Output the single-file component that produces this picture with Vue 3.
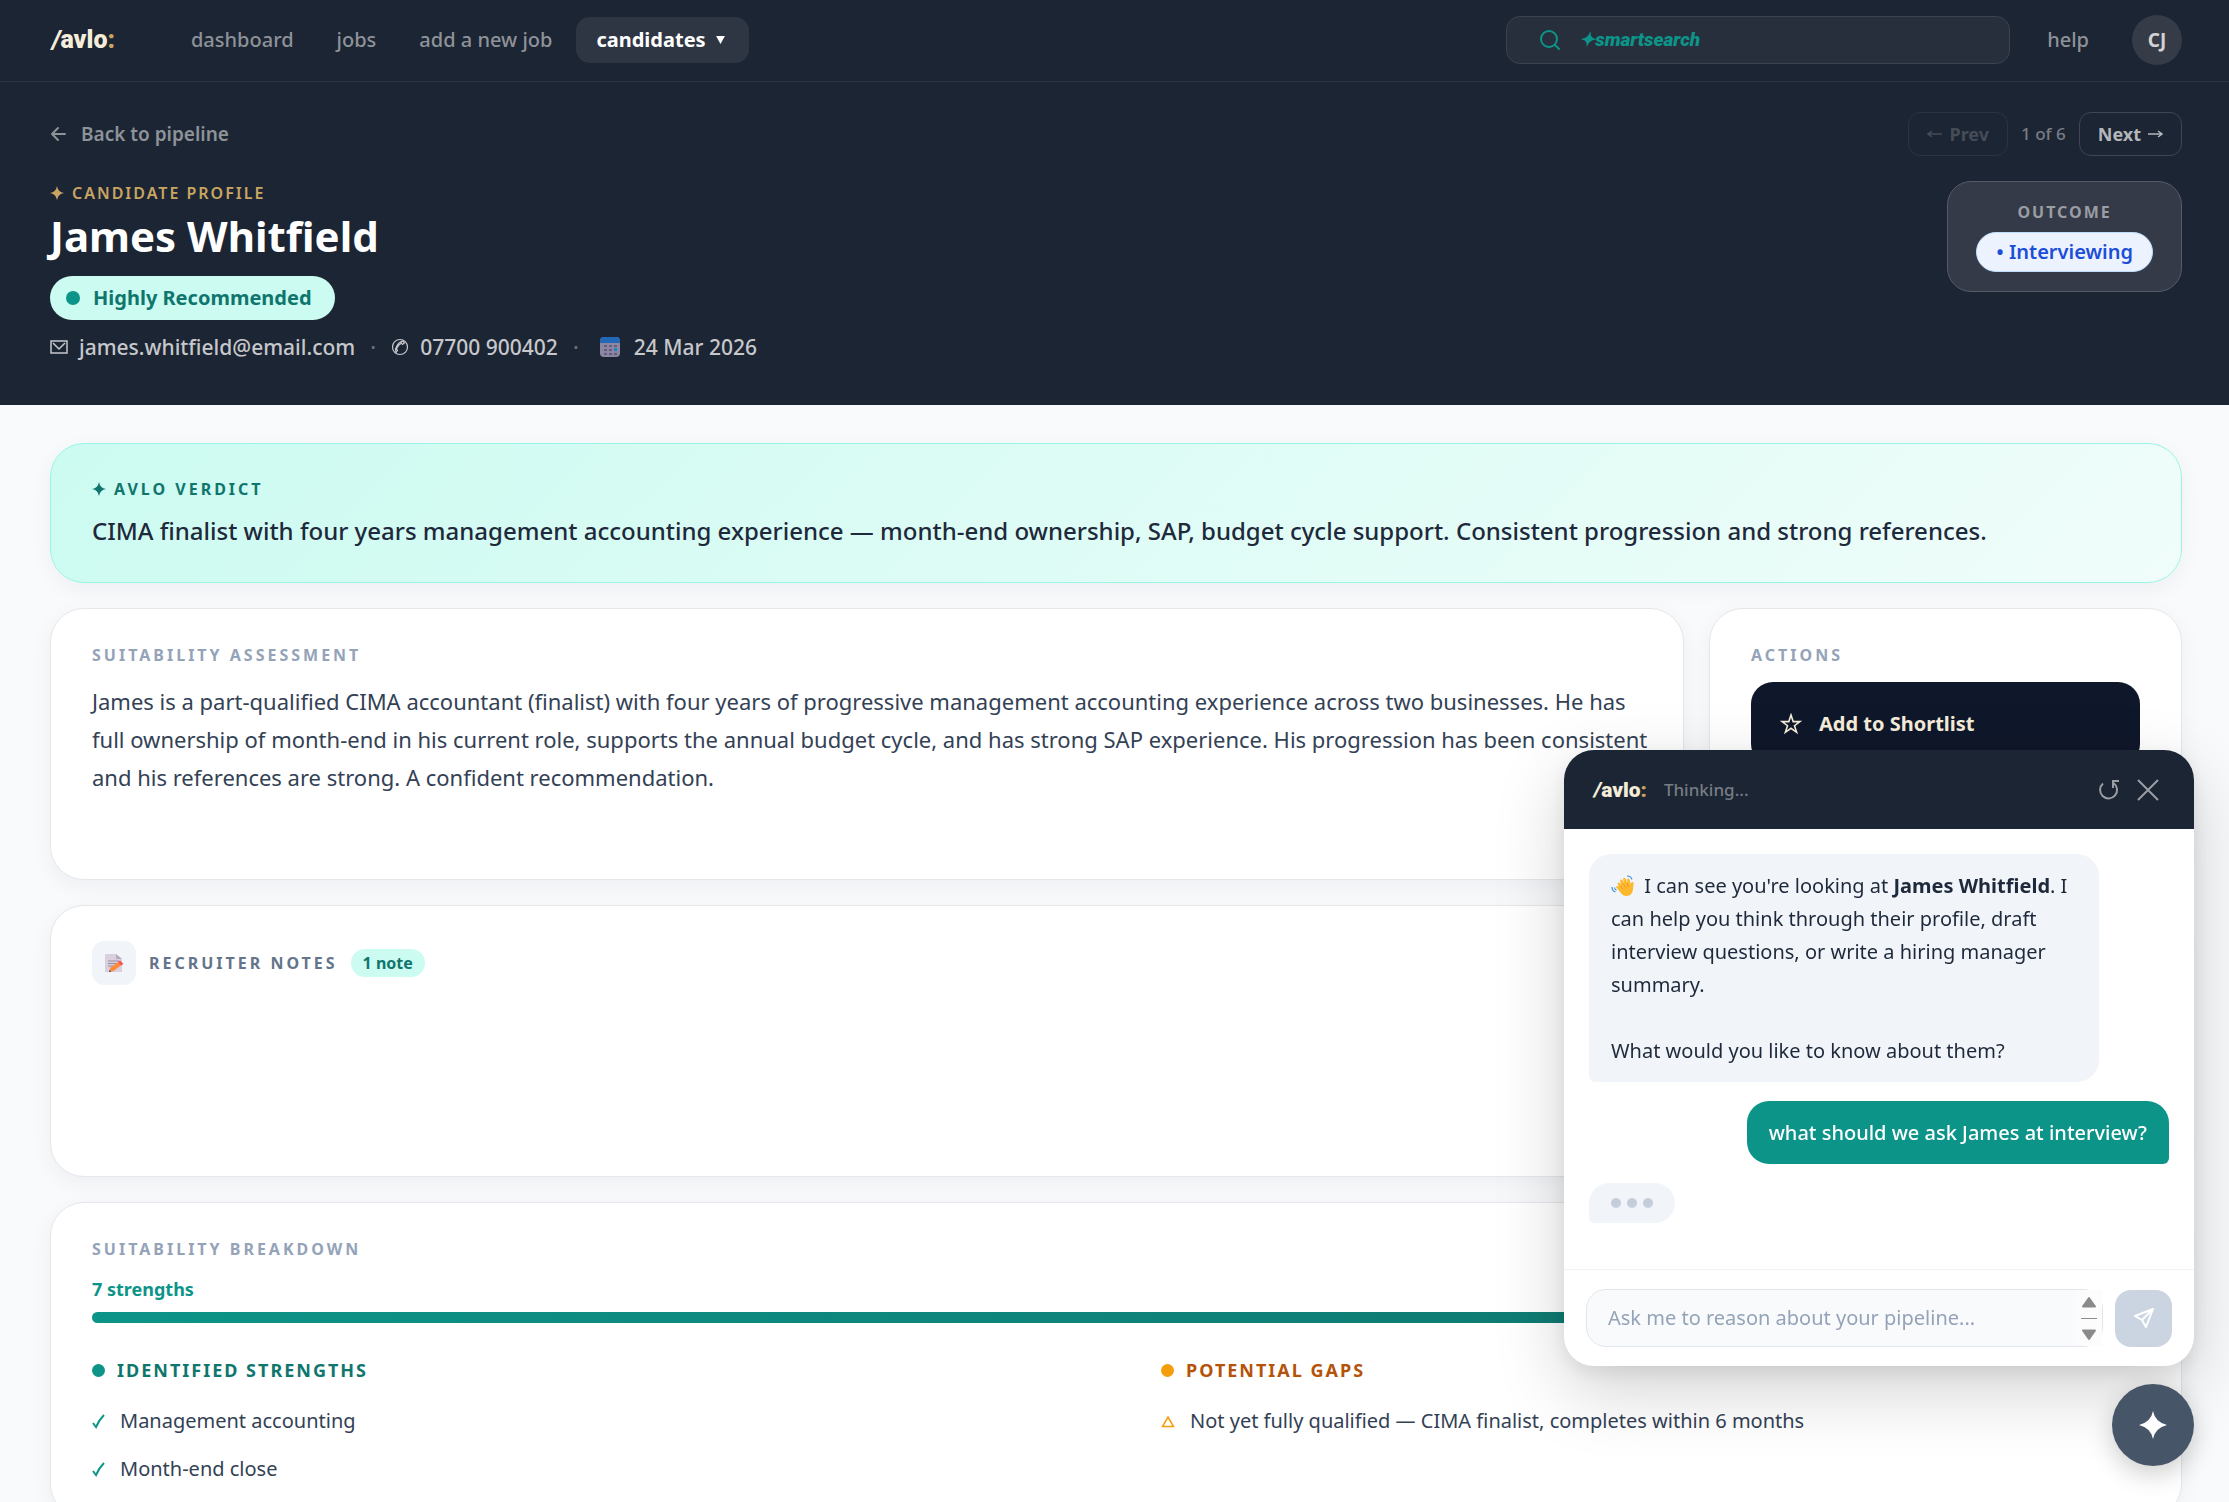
<script setup>
import { ref } from 'vue'

const navLinks = ['dashboard', 'jobs', 'add a new job']
const strengths = ['Management accounting', 'Month-end close']
const gaps = ['Not yet fully qualified — CIMA finalist, completes within 6 months']
const strengthShare = ref(88)
const search = ref('')
const draft = ref('')
</script>

<template>
  <div class="shell">
    <header class="nav">
      <a href="#" class="logo"><i>/</i>avlo<span>:</span></a>
      <nav class="links">
        <a v-for="link in navLinks" :key="link" href="#">{{ link }}</a>
        <button type="button" class="active">
          candidates
          <svg width="9" height="8" viewBox="0 0 10 9" aria-hidden="true"><path d="M0 0h10L5 9z" fill="currentColor" /></svg>
        </button>
      </nav>
      <label class="search">
        <svg width="22" height="22" viewBox="0 0 22 22" fill="none" stroke="currentColor" stroke-width="2" stroke-linecap="round" aria-hidden="true">
          <circle cx="10" cy="10" r="8" /><path d="M16 16l4 4" />
        </svg>
        <input v-model="search" type="text" placeholder="✦smartsearch" aria-label="Smart search" />
      </label>
      <a href="#" class="help">help</a>
      <button type="button" class="avatar">CJ</button>
    </header>

    <section class="hero">
      <div class="hero-bar">
        <a href="#" class="back">
          <svg width="16" height="16" viewBox="0 0 16 16" fill="none" stroke="currentColor" stroke-width="2" stroke-linecap="round" stroke-linejoin="round" aria-hidden="true"><path d="M15 8H2M8 2L2 8l6 6" /></svg>
          Back to pipeline
        </a>
        <div class="pager">
          <button type="button" disabled>
            <svg width="15" height="8" viewBox="0 0 15 8" fill="none" stroke="currentColor" stroke-width="1.5" aria-hidden="true"><path d="M15 4H1M5 1L1 4l4 3" /></svg>
            Prev
          </button>
          <span>1 of 6</span>
          <button type="button">
            Next
            <svg width="15" height="8" viewBox="0 0 15 8" fill="none" stroke="currentColor" stroke-width="1.5" aria-hidden="true"><path d="M0 4h14M10 1l4 3-4 3" /></svg>
          </button>
        </div>
      </div>
      <div class="hero-main">
        <div>
          <p class="eyebrow gold">
            <svg class="spark" viewBox="0 0 14 14" aria-hidden="true"><path d="M7 0Q8 6 14 7Q8 8 7 14Q6 8 0 7Q6 6 7 0z" fill="currentColor" /></svg>
            CANDIDATE PROFILE
          </p>
          <h1>James Whitfield</h1>
          <span class="rating"><i></i>Highly Recommended</span>
          <ul class="contact">
            <li>
              <svg width="18" height="14" viewBox="0 0 18 14" fill="none" stroke="currentColor" stroke-width="1.5" aria-hidden="true"><rect x="1" y="1" width="16" height="12" /><path d="M3 3l6 6 6-6" /></svg>
              james.whitfield@email.com
            </li>
            <li class="sep">·</li>
            <li>
              <svg width="18" height="18" viewBox="0 0 18 18" fill="none" stroke="currentColor" stroke-width="1.2" aria-hidden="true"><circle cx="9" cy="9" r="7.5" /><path d="M5 14.500l1.500-2-1-1.500Q7 7 10.500 5l1 1.500 2-1.500-1.500-1.800Q7 4 4.500 11z" /></svg>
              07700 900402
            </li>
            <li class="sep">·</li>
            <li>
              <svg class="calendar" width="22" height="22" viewBox="0 0 22 22" aria-hidden="true">
                <rect x="1" y="1" width="20" height="20" rx="4" fill="#8d86a3" />
                <path d="M5 1h12a4 4 0 0 1 4 4v2H1V5a4 4 0 0 1 4-4z" fill="#2268b5" />
                <path d="M5 9h3v2H5zM10 9h3v2h-3zM15 9h3v2h-3zM5 13h3v2H5zM10 13h3v2h-3zM5 17h3v2H5zM10 17h3v2h-3zM15 17h3v2h-3z" fill="#645d7d" />
                <path d="M15 12h3v3h-3z" fill="#1d84c6" />
              </svg>
              24 Mar 2026
            </li>
          </ul>
        </div>
        <aside class="outcome">
          <p>OUTCOME</p>
          <span>• Interviewing</span>
        </aside>
      </div>
    </section>

    <main class="content">
      <section class="card verdict">
        <p class="eyebrow wide">
          <svg class="spark" viewBox="0 0 14 14" aria-hidden="true"><path d="M7 0Q8 6 14 7Q8 8 7 14Q6 8 0 7Q6 6 7 0z" fill="currentColor" /></svg>
          AVLO VERDICT
        </p>
        <p class="verdict-text">CIMA finalist with four years management accounting experience — month-end ownership, SAP, budget cycle support. Consistent progression and strong references.</p>
      </section>

      <div class="split">
        <section class="card report">
          <h2>SUITABILITY ASSESSMENT</h2>
          <p class="assessment">James is a part-qualified CIMA accountant (finalist) with four years of progressive management accounting experience across two businesses. He has full ownership of month-end in his current role, supports the annual budget cycle, and has strong SAP experience. His progression has been consistent and his references are strong. A confident recommendation.</p>
        </section>
        <section class="card">
          <h2>ACTIONS</h2>
          <button type="button" class="shortlist">
            <svg width="22" height="22" viewBox="0 0 22 22" fill="none" stroke="currentColor" stroke-width="1.6" aria-hidden="true"><path d="M11 2l2.200 6.600H20l-5.500 4.100 2.100 6.600L11 15.300l-5.600 4 2.100-6.600L2 8.600h6.800z" /></svg>
            Add to Shortlist
          </button>
        </section>
      </div>

      <section class="card notes">
        <div class="notes-head">
          <span class="notes-icon">
            <svg width="20" height="20" viewBox="0 0 20 20" aria-hidden="true">
              <path d="M1 1h11l6 5v13H1z" fill="#d9d0df" /><path d="M12 1l6 5h-6z" fill="#b5a9be" />
              <path d="M4 8h11M4 10.500h9M4 13h5" stroke="#958b9f" stroke-width="1" />
              <path d="M5 19l1.500-4.500L14 9l3 3.500-7.500 5.500z" fill="#ff8b3d" /><path d="M14 9l2-1.500 3.500 3.500L17 12.500z" fill="#f4514e" /><path d="M5 19l.6-2 1.700 1.400z" fill="#4f3b48" />
            </svg>
          </span>
          <h2>RECRUITER NOTES</h2>
          <span class="badge">1 note</span>
        </div>
      </section>

      <section class="card breakdown">
        <h2>SUITABILITY BREAKDOWN</h2>
        <p class="count">7 strengths</p>
        <div class="bar"><div class="bar-fill" :style="{ width: strengthShare + '%' }"></div></div>
        <div class="columns">
          <div>
            <h3 class="good"><i></i>IDENTIFIED STRENGTHS</h3>
            <ul>
              <li v-for="item in strengths" :key="item">
                <svg width="13" height="15" viewBox="0 0 13 15" fill="none" stroke="#0d9488" stroke-width="2" aria-hidden="true"><path d="M1 9l3 4Q7 6 12 1" /></svg>
                {{ item }}
              </li>
            </ul>
          </div>
          <div>
            <h3 class="warn"><i></i>POTENTIAL GAPS</h3>
            <ul>
              <li v-for="item in gaps" :key="item">
                <svg width="14" height="13" viewBox="0 0 14 13" fill="none" stroke="#f59e0b" stroke-width="1.5" aria-hidden="true"><path d="M7 2l5.500 9.500h-11z" /></svg>
                {{ item }}
              </li>
            </ul>
          </div>
        </div>
      </section>
    </main>

    <section class="chat" aria-label="Assistant">
      <header class="chat-head">
        <span class="logo small"><i>/</i>avlo<span>:</span></span>
        <span class="status">Thinking...</span>
        <button type="button" aria-label="Restart">
          <svg width="22" height="22" viewBox="0 0 22 22" fill="none" stroke="currentColor" stroke-width="2" aria-hidden="true"><path d="M5 4.500a8.500 8.500 0 1 0 10.500-.5" /><path d="M21 2h-6v7" /></svg>
        </button>
        <button type="button" aria-label="Close">
          <svg width="22" height="22" viewBox="0 0 22 22" fill="none" stroke="currentColor" stroke-width="2" aria-hidden="true"><path d="M1 1l20 20M21 1L1 21" /></svg>
        </button>
      </header>
      <div class="messages">
        <div class="bubble">
          <p>
            <svg class="wave" width="24" height="22" viewBox="0 0 24 22" aria-hidden="true">
              <path d="M8 12L6.500 8.500q1-2 2.500 0l1 1L9 5.500q.8-2 2.500-.3l1.500 3-1-4.700q1.200-1.800 2.700.2l1.600 4-.2-3.500q1.600-1.400 2.500.6l1.100 4.400.7-2q2-.8 2.200 1L22 14q-.5 7-6.500 7-3.500 0-6-3.500L5 12q.5-1.700 2-.8z" fill="#fdb92e" />
              <path d="M9 11l3 3M12 8.500l3 4M16 8l1.500 4" stroke="#ef942f" stroke-width="1" />
              <path d="M1 12q0 4 3.500 5M3.500 12.500q.3 2 2 2.800M16 1q4 0 5 3.500" fill="none" stroke="#4292dc" stroke-width="1.200" />
            </svg>
            I can see you're looking at <b>James Whitfield</b>. I can help you think through their profile, draft interview questions, or write a hiring manager summary.
          </p>
          <p>What would you like to know about them?</p>
        </div>
        <div class="bubble user">what should we ask James at interview?</div>
        <div class="bubble typing" aria-label="Typing"><i></i><i></i><i></i></div>
      </div>
      <form class="composer" @submit.prevent>
        <div class="field">
          <textarea v-model="draft" rows="1" placeholder="Ask me to reason about your pipeline..." aria-label="Message"></textarea>
          <svg class="scroller" width="26" height="56" viewBox="0 0 26 56" aria-hidden="true">
            <path d="M0 0h26v56H0z" fill="#fcfcfc" /><path d="M13 8l6 8.500H7zM13 49l6-8.500H7z" fill="#8b8b8b" stroke="#8b8b8b" stroke-width="2" stroke-linejoin="round" /><path d="M5 28.500h16" stroke="#8b8b8b" />
          </svg>
        </div>
        <button type="submit" class="send" aria-label="Send">
          <svg width="22" height="22" viewBox="0 0 22 22" fill="none" stroke="#fff" stroke-width="2" stroke-linejoin="round" aria-hidden="true"><path d="M20 2L2 9l7 4 4 7zM20 2L9 13" /></svg>
        </button>
      </form>
    </section>
    <button type="button" class="fab" aria-label="Toggle assistant">
      <svg width="28" height="28" viewBox="0 0 28 28" aria-hidden="true"><path d="M14 0Q16 11 28 14Q16 17 14 28Q12 17 0 14Q12 11 14 0z" fill="#fff" /></svg>
    </button>
  </div>
</template>

<style>
body {
  margin: 0;
  background: #f9fafc;
}
</style>

<style scoped>
.shell {
  height: 100vh;
  overflow: hidden;
  background: #f9fafc;
  color: #334155;
  font-family: "Noto Sans", sans-serif;
  font-size: 20px;
  line-height: 28px;
}
.shell * {
  box-sizing: border-box;
}
a {
  color: inherit;
  text-decoration: none;
}
button,
input,
textarea {
  font: inherit;
  color: inherit;
  border: 0;
  background: none;
  padding: 0;
}
p,
h1,
h2,
h3,
ul {
  margin: 0;
  padding: 0;
}
ul {
  list-style: none;
}

.nav {
  display: flex;
  align-items: center;
  height: 82px;
  padding: 0 47px 2px 50px;
  background: #1c2533;
  border-bottom: 1px solid #2a3341;
  color: #8e9299;
  font-weight: 500;
}
.logo {
  padding-left: 2px;
  font-family: Roboto, sans-serif;
  font-size: 25px;
  font-weight: 900;
  color: #f5ecd9;
}
.logo span {
  color: #c9a562;
}
.logo.small {
  font-size: 21px;
}
.links {
  display: flex;
  align-items: center;
  gap: 5px;
  margin-left: 57px;
}
.links a {
  padding: 0 19px;
}
.links .active {
  display: flex;
  align-items: center;
  gap: 10px;
  height: 46px;
  padding: 0 24px 0 20px;
  border-radius: 14px;
  background: #2e3643;
  color: #fff;
  font-weight: 700;
}
.search {
  display: flex;
  align-items: center;
  gap: 18px;
  width: 504px;
  height: 48px;
  margin-left: auto;
  padding: 0 32px;
  border: 1px solid #3b4350;
  border-radius: 14px;
  background: #272f3d;
  color: #0d9488;
}
.search input {
  flex: 1;
  min-width: 0;
  outline: 0;
  font-family: Roboto, sans-serif;
  font-size: 19px;
  font-style: italic;
  font-weight: 900;
}
.search input::placeholder {
  color: #0d9488;
}
.help {
  margin: 0 43px 0 37px;
}
.avatar {
  width: 50px;
  height: 50px;
  border-radius: 50%;
  background: #363c47;
  color: #d2d3d6;
  font-size: 19px;
  font-weight: 700;
}

.hero {
  padding: 30px 47px 44px 50px;
  background: #1c2533;
  color: #c6c8cc;
}
.hero-bar,
.hero-main {
  display: flex;
  align-items: center;
  justify-content: space-between;
}
.hero-main {
  align-items: flex-start;
  margin-top: 25px;
}
.back {
  display: flex;
  align-items: center;
  gap: 15px;
  color: #8e9299;
  font-size: 19px;
  font-weight: 600;
}
.pager {
  display: flex;
  align-items: center;
  gap: 13px;
  color: #777c85;
  font-size: 17px;
  font-weight: 500;
}
.pager button {
  display: flex;
  align-items: center;
  gap: 7px;
  height: 44px;
  padding: 0 18px;
  border: 1px solid #3e4653;
  border-radius: 12px;
  color: #b3b6bb;
  font-size: 18px;
  font-weight: 700;
}
.pager button:disabled {
  border-color: #2a3341;
  color: #454c58;
}
.eyebrow {
  display: flex;
  align-items: center;
  gap: 8px;
  font-size: 16px;
  font-weight: 700;
  line-height: 24px;
  letter-spacing: 2px;
}
.wide {
  letter-spacing: 3px;
}
.gold {
  color: #c9a562;
  font-weight: 600;
}
.spark {
  width: 14px;
  height: 14px;
}
h1 {
  margin-top: 6px;
  color: #fff;
  font-size: 42px;
  line-height: 50px;
}
.rating {
  display: inline-flex;
  align-items: center;
  gap: 13px;
  height: 44px;
  margin-top: 15px;
  padding: 0 23px 0 16px;
  border-radius: 22px;
  background: #ccfbf1;
  color: #0f766e;
  font-weight: 700;
  vertical-align: top;
}
.rating i {
  width: 14px;
  height: 14px;
  border-radius: 50%;
  background: #0d9488;
}
.contact {
  display: flex;
  align-items: center;
  margin-top: 13px;
  font-size: 21px;
  font-weight: 500;
}
.contact li {
  display: flex;
  align-items: center;
  gap: 11px;
}
.contact .sep {
  width: 36px;
  justify-content: center;
  color: #69707b;
}
.contact .calendar {
  margin: 0 2px 0 5px;
}
.outcome {
  display: flex;
  flex-direction: column;
  align-items: center;
  gap: 8px;
  padding: 18px 28px 19px;
  border: 1px solid #555b66;
  border-radius: 24px;
  background: #343a47;
}
.outcome p {
  color: #9a9da3;
  font-size: 16px;
  font-weight: 700;
  line-height: 24px;
  letter-spacing: 2px;
}
.outcome span {
  height: 40px;
  padding: 0 19px;
  border: 1px solid #bfdbfe;
  border-radius: 20px;
  background: #ecf3ff;
  color: #1d4ed8;
  font-weight: 600;
  line-height: 38px;
}

.content {
  display: flex;
  flex-direction: column;
  gap: 25px;
  padding: 38px 47px 38px 50px;
}
.card {
  padding: 34px 41px;
  border: 1px solid #e5e7eb;
  border-radius: 34px;
  background: #fff;
  box-shadow: 0 6px 22px rgba(15, 23, 42, 0.05);
}
.verdict {
  padding: 33px 41px;
  border-color: #99f6e4;
  background: linear-gradient(135deg, #ccfbf1, #f0fdfa);
  color: #0f766e;
}
.verdict-text {
  margin-top: 12px;
  color: #1e293b;
  font-size: 24px;
  font-weight: 500;
  line-height: 36px;
}
.split {
  display: grid;
  grid-template-columns: 1fr 473px;
  gap: 25px;
}
h2 {
  color: #94a3b8;
  font-size: 16px;
  font-weight: 700;
  line-height: 24px;
  letter-spacing: 3px;
}
.split .card,
.notes {
  min-height: 272px;
}
.split .report {
  padding-right: 24px;
}
.assessment {
  margin-top: 15px;
  font-size: 22px;
  line-height: 38px;
}
.shortlist {
  display: flex;
  align-items: center;
  gap: 17px;
  width: 100%;
  height: 84px;
  margin-top: 15px;
  padding: 0 29px;
  border-radius: 22px;
  background: #0f172a;
  color: #f5ecd9;
  font-weight: 700;
}
.notes {
  padding-top: 35px;
}
.notes-head {
  display: flex;
  align-items: center;
  gap: 13px;
}
.notes-icon {
  display: grid;
  place-items: center;
  width: 44px;
  height: 44px;
  border-radius: 12px;
  background: #f1f5f9;
}
.notes h2 {
  color: #64748b;
}
.badge {
  padding: 0 12px;
  border-radius: 14px;
  background: #ccfbf1;
  color: #0f766e;
  font-size: 16px;
  font-weight: 700;
}
.count {
  margin-top: 16px;
  color: #0d9488;
  font-size: 18px;
  font-weight: 700;
  line-height: 24px;
}
.bar {
  height: 11px;
  margin-top: 11px;
  border-radius: 6px;
  background: #fef3c7;
  overflow: hidden;
}
.bar-fill {
  height: 100%;
  background: linear-gradient(90deg, #0d9488, #0f766e);
}
.columns {
  display: grid;
  grid-template-columns: 1fr 1fr;
  gap: 90px;
  margin-top: 35px;
}
h3 {
  display: flex;
  align-items: center;
  gap: 12px;
  font-size: 18px;
  line-height: 24px;
  letter-spacing: 2px;
}
h3 i {
  width: 13px;
  height: 13px;
  border-radius: 50%;
  background: currentColor;
}
.good {
  color: #0f766e;
}
.good i {
  background: #0d9488;
}
.warn {
  color: #b45309;
}
.warn i {
  background: #f59e0b;
}
.columns ul {
  display: grid;
  gap: 20px;
  margin-top: 25px;
}
.columns li {
  display: flex;
  align-items: center;
  gap: 15px;
}

.chat {
  position: fixed;
  right: 35px;
  bottom: 136px;
  display: flex;
  flex-direction: column;
  width: 630px;
  height: 616px;
  border-radius: 30px;
  background: #fff;
  box-shadow: 0 24px 70px rgba(0, 0, 0, 0.18), 0 6px 20px rgba(0, 0, 0, 0.08);
  overflow: hidden;
}
.chat-head {
  display: flex;
  align-items: center;
  gap: 17px;
  height: 79px;
  padding: 0 35px 0 28px;
  background: #1c2533;
  color: #9a9da3;
}
.status {
  flex: 1;
  color: #777c85;
  font-size: 17px;
  font-weight: 500;
}
.chat-head button {
  display: flex;
}
.messages {
  flex: 1;
  display: flex;
  flex-direction: column;
  align-items: flex-start;
  gap: 19px;
  padding: 25px;
}
.bubble {
  max-width: 510px;
  padding: 15px 22px;
  border-radius: 22px 22px 22px 6px;
  background: #f1f5f9;
  color: #1e293b;
  line-height: 33px;
}
.bubble p + p {
  margin-top: 33px;
}
.wave {
  margin-right: 4px;
  vertical-align: -4px;
}
.user {
  align-self: flex-end;
  border-radius: 22px 22px 6px 22px;
  background: #0d9488;
  color: #fff;
  font-weight: 500;
}
.typing {
  display: flex;
  gap: 6px;
}
.typing i {
  width: 10px;
  height: 10px;
  border-radius: 50%;
  background: #c3ceda;
}
.composer {
  display: flex;
  align-items: center;
  gap: 12px;
  padding: 19px 22px;
  border-top: 1px solid #f1f3f5;
}
.field {
  position: relative;
  flex: 1;
  display: flex;
}
.field textarea {
  flex: 1;
  height: 58px;
  padding: 14px 21px;
  border: 1px solid #e2e5ea;
  border-radius: 20px;
  background: #f9fafc;
  outline: 0;
  resize: none;
  overflow: hidden;
}
.field textarea::placeholder {
  color: #94a3b8;
  opacity: 1;
}
.scroller {
  position: absolute;
  top: 1px;
  right: 1px;
}
.send {
  display: grid;
  place-items: center;
  width: 57px;
  height: 57px;
  border-radius: 16px;
  background: #cbd5e1;
}
.fab {
  position: fixed;
  right: 35px;
  bottom: 36px;
  display: grid;
  place-items: center;
  width: 82px;
  height: 82px;
  border-radius: 50%;
  background: #475569;
  box-shadow: 0 8px 26px rgba(0, 0, 0, 0.2);
}
</style>
